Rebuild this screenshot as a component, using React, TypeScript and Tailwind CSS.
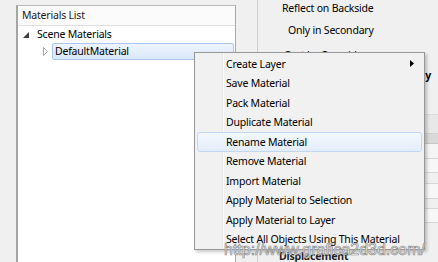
import React from "react";

const menuItems = [
  "Create Layer",
  "Save Material",
  "Pack Material",
  "Duplicate Material",
  "Rename Material",
  "Remove Material",
  "Import Material",
  "Apply Material to Selection",
  "Apply Material to Layer",
  "Select All Objects Using This Material",
];

export default function App() {
  return (
    <div className="relative w-[438px] h-[262px] overflow-hidden bg-[#f0f0f0] text-black font-['Noto_Sans',sans-serif] text-[10.5px] tracking-[-0.2px] leading-none">
      <div className="flex h-full">
        {/* Materials list panel */}
        <div className="ml-[16px] mt-[5px] w-[220px] shrink-0 flex flex-col bg-white border-l-2 border-l-[#a5a5a5] border-t border-t-[#b9b9b9] border-r border-r-[#a8a8a8]">
          <div className="h-[20px] shrink-0 flex items-center pl-[4px] border-b border-[#dfdfdf] bg-[#fbfbfb] text-[#1a1a1a]">
            Materials List
          </div>
          <div className="h-[17px] shrink-0 flex items-center pl-[5px]">
            <svg width="6" height="6" viewBox="0 0 6 6" className="mt-[1px]">
              <polygon points="6,0 6,6 0,6" fill="#3c3c3c" />
            </svg>
            <span className="ml-[8px]">Scene Materials</span>
          </div>
          <div className="h-[17px] shrink-0 flex items-center pl-[25px] pr-[1px]">
            <svg width="5" height="9" viewBox="0 0 5 9">
              <polygon points="0.5,0.5 4.5,4.5 0.5,8.5" fill="none" stroke="#a6a6a6" strokeWidth="1" />
            </svg>
            <div className="ml-[4px] flex-1 h-full flex items-center pl-[2px] border border-[#a9c7ee] rounded-[2px] bg-gradient-to-b from-[#eef4fd] to-[#dae8fb]">
              DefaultMaterial
            </div>
          </div>
        </div>

        {/* splitter gap */}
        <div className="w-[21px] shrink-0" />

        {/* properties area */}
        <div className="flex-1 flex flex-col border-l border-[#cfcfcf] min-w-0">
          <div className="h-[16px] shrink-0 flex items-center pl-[24px] whitespace-nowrap">Reflect on Backside</div>
          <div className="h-[20px] mt-[4px] shrink-0 flex items-center pl-[30px] whitespace-nowrap">Only in Secondary</div>
          <div className="h-[20px] mt-[5px] shrink-0 flex items-center pl-[26px] whitespace-nowrap">Cast by Override</div>
          <div className="h-[20px] shrink-0 flex items-center justify-end pr-[7px] font-bold whitespace-nowrap">Opacity</div>
          <div className="h-[30px] shrink-0 border-b border-[#dcdcdc]" />
          <div className="h-[19px] shrink-0 bg-[#e8e8e8] border-b border-[#d0d0d0]" />
          <div className="h-[10px] shrink-0 bg-[#d9d9d9] border-b border-[#c8c8c8]" />
          <div className="h-[15px] shrink-0 border-b border-[#d6d6d6] bg-[#f5f5f5]" />
          <div className="h-[14px] shrink-0 border-b border-[#d6d6d6] bg-[#f7f7f7]" />
          <div className="h-[11px] shrink-0 border-b border-[#d6d6d6]" />
          <div className="h-[15px] shrink-0 border-b border-[#d6d6d6] bg-[#f7f7f7]" />
          <div className="h-[10px] shrink-0 border-b border-[#d6d6d6]" />
          <div className="h-[14px] shrink-0 border-b border-[#d6d6d6] bg-[#f7f7f7]" />
          <div className="flex-1 flex items-end pb-[1px] pl-[21px] font-bold text-[#222] whitespace-nowrap">Displacement</div>
        </div>
      </div>

      {/* context menu */}
      <div className="absolute left-[194px] top-[52px] w-[231px] flex flex-col pt-[1px] border border-[#979797] bg-[linear-gradient(to_right,#f1f1f1_27px,#e6e6e6_27px,#e6e6e6_28px,#fbfbfb_28px,#fbfbfb_29px,#f1f1f1_29px)] shadow-[2px_2px_3px_rgba(0,0,0,0.22)]">
        {menuItems.map((label, i) =>
          i === 4 ? (
            <div
              key={label}
              className="h-[19.5px] mx-[2px] flex items-center pl-[28px] border border-[#c2d8f2] rounded-[3px] bg-gradient-to-b from-[#f3f8fe] to-[#e3edfa] whitespace-nowrap"
            >
              {label}
            </div>
          ) : (
            <div key={label} className="h-[19.5px] flex items-center justify-between pl-[31px] pr-[10px] whitespace-nowrap">
              <span>{label}</span>
              {i === 0 && (
                <svg width="4" height="7" viewBox="0 0 4 7">
                  <polygon points="0,0 4,3.5 0,7" fill="#000" />
                </svg>
              )}
            </div>
          )
        )}
      </div>

      {/* watermark */}
      <div className="absolute left-[224px] top-[242px] font-['Liberation_Sans',sans-serif] text-[16px] tracking-normal leading-none text-[#fbfbfb] [-webkit-text-stroke:0.7px_#8c8c8c] whitespace-nowrap">
        http://www.grafica2d3d.com/
      </div>
    </div>
  );
}
